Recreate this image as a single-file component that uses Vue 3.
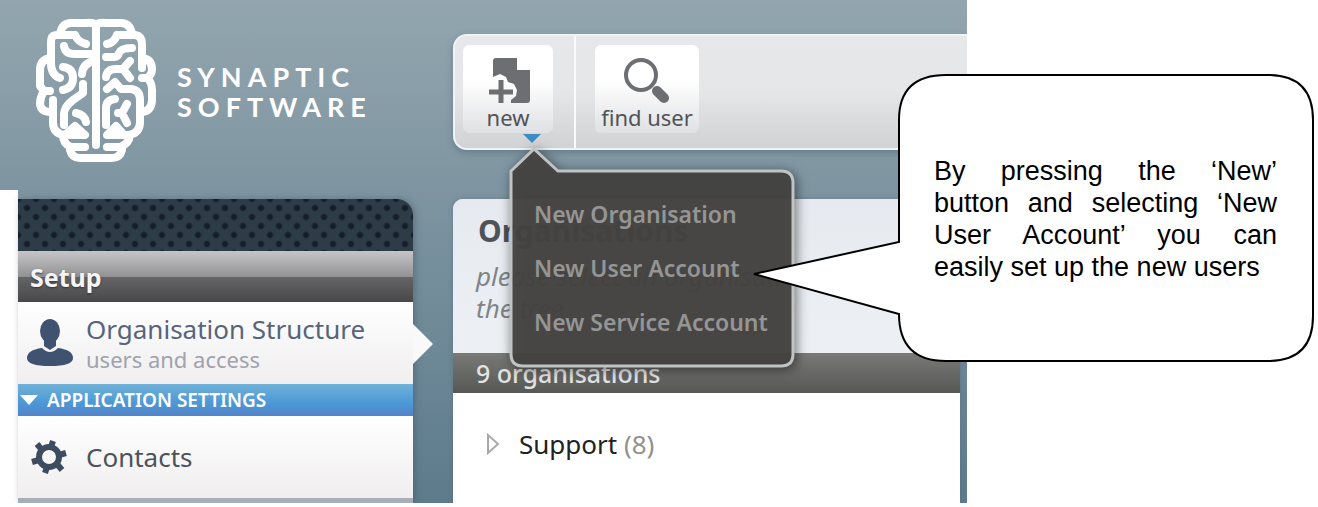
<script setup>
import { ref } from 'vue'

const menuOpen = ref(true)
const actions = ['New Organisation', 'New User Account', 'New Service Account']
</script>

<template>
    <div class="page">
        <div class="app">
            <aside class="sidebar">
                <header class="brand">
                    <svg class="brand-logo" viewBox="0 0 140 160" aria-hidden="true">
                        <path class="fold" d="M71 14V135M71 15C69 12 63 13 58 13H46Q37 13 35 24M71 15C73 12 79 13 84 13H96Q105 13 107 24M50 25H32Q26 25 26 32V53Q26 65 35 68M50 25Q53 32 61 34M25 48Q15 50 15 60V76L19 81Q15 87 15 94Q16 102 26 102M18 81H25M92 25H110Q117 26 117 34V58M92 25Q89 33 82 34M118 48Q127 50 127 59Q127 65 122 68Q127 72 127 80V91Q126 101 117 102M123 68H117" />
                        <path class="fold" d="M28 90V112Q28 124 40 125L50 116L60 125H38Q38 134 46 137H60M45 140Q47 148 55 148H87Q95 148 97 140M82 137H95Q104 134 105 125H82L91 116L99 125H104Q115 123 115 112V90Q115 80 106 79H96L90 72L82 79" />
                        <path class="fold" d="M39 36Q40 44 50 44H71M71 51Q58 52 57 64M38 57Q48 58 48 68Q48 78 38 80M58 74V83L48 90Q39 97 39 104V115M51 103Q60 105 61 112M81 47H89Q93 47 94 43Q96 38 107 38M81 67Q82 59 91 59H98L105 51M98 59L105 68M90 89Q81 90 81 98V115M102 94L97 103L102 113M97 103H93" />
                    </svg>
                    <p class="brand-name">SYNAPTIC<br />SOFTWARE</p>
                </header>
                <div class="side-body">
                    <nav class="side-panel">
                        <div class="grille"></div>
                        <h2 class="side-title">Setup</h2>
                        <a class="side-item active" href="#">
                            <svg class="side-icon" viewBox="0 0 48 48" aria-hidden="true">
                                <ellipse cx="24" cy="12" rx="10" ry="12" />
                                <path d="M18 18h12v9l-6 4-6-4zM16 29q8 8 16 0 15 2 15 10 0 8-23 8T1 39q0-8 15-10z" />
                            </svg>
                            <span class="side-text">
                                <span class="side-label">Organisation Structure</span>
                                <span class="side-note">users and access</span>
                            </span>
                        </a>
                        <h3 class="side-section">
                            <svg class="section-arrow" viewBox="0 0 18 10" aria-hidden="true"><path d="M0 0h18l-9 10z" /></svg>
                            APPLICATION SETTINGS
                        </h3>
                        <a class="side-item" href="#">
                            <svg class="side-icon" viewBox="0 0 48 48" aria-hidden="true">
                                <circle class="gear" cx="23" cy="24" r="10" />
                                <path class="teeth" d="M25 14l2-6M33 22l7-2M31 31l5 6M21 34l-2 6M13 27l-7 2M16 17l-5-6" />
                            </svg>
                            <span class="side-label">Contacts</span>
                        </a>
                        <div class="side-end"></div>
                    </nav>
                </div>
            </aside>

            <main class="content">
                <div class="toolbar">
                    <div class="tool-group">
                        <button class="tool tool-new" type="button" @click="menuOpen = !menuOpen">
                            <svg class="tool-icon" viewBox="0 0 48 48" aria-hidden="true">
                                <path class="solid" d="M9 4q0-3 3-3h21v12h13v30q0 3-3 3H27v-3l5-4 1-6-3-6-6-2-2-5-6-3-7 3z" />
                                <path class="plus" d="M17 23v23M5 35h24" />
                            </svg>
                            new
                        </button>
                        <svg class="drop-arrow" viewBox="0 0 18 9" aria-hidden="true"><path d="M0 0h18L9 9z" /></svg>
                        <div v-if="menuOpen" class="menu">
                            <svg class="menu-shape" viewBox="0 0 286 222" aria-hidden="true">
                                <path d="M2 24L25 2L49 24H272Q284 24 284 36V207Q284 219 272 219H14Q2 219 2 207Z" />
                            </svg>
                            <button v-for="action in actions" :key="action" class="menu-item" type="button">{{ action }}</button>
                        </div>
                    </div>
                    <button class="tool tool-find" type="button">
                        <svg class="tool-icon" viewBox="0 0 48 48" aria-hidden="true">
                            <circle class="lens" cx="18" cy="18" r="15" />
                            <path class="handle" d="M34 34l7 7" />
                        </svg>
                        find user
                    </button>
                </div>

                <section class="panel">
                    <header class="panel-head">
                        <h1>Organisations</h1>
                        <p>please select an organisation from<br />the tree</p>
                    </header>
                    <h2 class="panel-bar">9 organisations</h2>
                    <div class="tree-row">
                        <svg class="tree-arrow" viewBox="0 0 14 22" aria-hidden="true"><path d="M2 2v18l10-9z" /></svg>
                        <a href="#">Support <span>(8)</span></a>
                    </div>
                </section>
            </main>
        </div>

        <div class="callout">
            <svg class="callout-shape" viewBox="0 0 564 291" aria-hidden="true">
                <path d="M147 169V47Q147 2 194 2H516Q561 2 561 47V243Q561 288 516 288H194Q147 288 147 241L2 201Z" />
            </svg>
            <p>
                By pressing the ‘New’<br />
                button and selecting ‘New<br />
                User Account’ you can
                <span class="last-line">easily set up the new users</span>
            </p>
        </div>
    </div>
</template>

<style>
body {
    background: #fff;
}
</style>

<style scoped>
* {
    box-sizing: border-box;
}
.page {
    position: relative;
    padding: 0 351px 4px 0;
    font-family: "Noto Sans", "Open Sans", sans-serif;
}
h1,
h2,
h3,
p {
    margin: 0;
}
button {
    border: 0;
    font-family: inherit;
    cursor: pointer;
}
a {
    text-decoration: none;
}
.app {
    display: grid;
    grid-template-columns: 413px minmax(0, 1fr);
    overflow: hidden;
    background: linear-gradient(#93a6af, #7e95a1 38%, #5d7b8c);
}
.sidebar {
    display: flex;
    flex-direction: column;
}
.brand {
    display: flex;
    align-items: flex-start;
    gap: 12px;
    height: 190px;
    padding: 10px 0 0 25px;
}
.brand-logo {
    width: 140px;
    height: 160px;
}
.fold {
    fill: none;
    stroke: #fff;
    stroke-width: 8;
    stroke-linecap: round;
    stroke-linejoin: round;
}
.brand-name {
    padding-top: 52px;
    color: #fff;
    font-family: Lato, sans-serif;
    font-size: 27px;
    font-weight: 700;
    line-height: 30px;
    letter-spacing: 6px;
}
.side-body {
    padding-top: 9px;
    border-left: 18px solid #fff;
}
.side-panel {
    border-radius: 0 16px 0 0;
    box-shadow: 2px 0 6px #40566480;
}
.grille {
    height: 52px;
    border-radius: 0 16px 0 0;
    background:
        radial-gradient(circle, #141d29 2px, transparent 4px) 0 0 / 18px 18px,
        radial-gradient(circle, #141d29 2px, transparent 4px) 9px 9px / 18px 18px,
        #2e3c48;
}
.side-title {
    height: 51px;
    padding-left: 12px;
    background: linear-gradient(#c6c6c9, #929295 50%, #656567 51%, #48484a);
    color: #f4f4f4;
    font-size: 25px;
    line-height: 52px;
    text-shadow: 0 1px 2px #333;
}
.side-item {
    position: relative;
    display: flex;
    align-items: center;
    gap: 12px;
    height: 82px;
    padding-left: 8px;
    background: linear-gradient(#fff, #f0eeef);
    color: #4d5258;
}
.side-item.active {
    color: #56647c;
}
.side-item.active::after {
    content: "";
    position: absolute;
    left: 100%;
    top: 22px;
    border: 20px solid transparent;
    border-left-color: #f9f9fa;
    border-right-width: 0;
}
.side-icon {
    width: 48px;
    height: 48px;
    flex: none;
    fill: #3f5370;
}
.gear {
    fill: none;
    stroke: #3e4c60;
    stroke-width: 6;
}
.teeth {
    stroke: #3e4c60;
    stroke-width: 6;
}
.side-text {
    display: flex;
    flex-direction: column;
}
.side-label {
    font-size: 26px;
    line-height: 32px;
}
.side-note {
    color: #a0a2ad;
    font-size: 22px;
    line-height: 28px;
}
.side-section {
    display: flex;
    align-items: center;
    gap: 9px;
    height: 32px;
    padding-left: 2px;
    background: linear-gradient(#70b1d8, #4c98d6 60%, #5383c8);
    color: #fff;
    font-size: 19px;
    font-weight: 600;
}
.section-arrow {
    width: 18px;
    fill: #fff;
}
.side-end {
    height: 5px;
    background: #a8aeb9;
}
.content {
    padding: 34px 0 0 40px;
}
.toolbar {
    display: flex;
    height: 116px;
    border: 2px solid #edf3f6;
    border-right: 0;
    border-radius: 14px 0 0 14px;
    background: linear-gradient(#e6e8ea, #e4e6e8 50%, #d0d2d4);
    box-shadow: 0 3px 6px #50657380;
}
.tool-group {
    position: relative;
    width: 121px;
    padding: 9px 0 0 8px;
    border-right: 2px solid #fafbfc;
}
.tool {
    display: flex;
    flex-direction: column;
    align-items: center;
    height: 88px;
    padding: 12px 0 0;
    border-radius: 6px;
    background: linear-gradient(#fff 40%, #e0e1e3);
    color: #505358;
    font-size: 22px;
    line-height: 24px;
}
.tool-new {
    width: 90px;
}
.tool-find {
    width: 104px;
    margin: 9px 0 0 19px;
}
.tool-icon {
    width: 48px;
    height: 48px;
    flex: none;
}
.solid {
    fill: #6d6e71;
}
.plus {
    stroke: #6d6e71;
    stroke-width: 5;
}
.lens {
    fill: #fff;
    stroke: #6d6e71;
    stroke-width: 4;
}
.handle {
    stroke: #6d6e71;
    stroke-width: 10;
    stroke-linecap: round;
}
.drop-arrow {
    position: absolute;
    top: 98px;
    left: 68px;
    width: 18px;
    fill: #3f8cc4;
}
.menu {
    position: absolute;
    z-index: 2;
    top: 111px;
    left: 54px;
    display: flex;
    flex-direction: column;
    width: 286px;
    height: 222px;
    padding: 40px 0 0 25px;
}
.menu-shape {
    position: absolute;
    top: 0;
    left: 0;
    width: 286px;
    height: 222px;
    overflow: visible;
    fill: #444341;
    fill-opacity: 0.95;
    stroke: #c0c3c4;
    stroke-width: 3;
    filter: drop-shadow(2px 2px 6px #0008);
}
.menu-item {
    position: relative;
    height: 54px;
    padding: 0;
    background: none;
    color: #949594;
    font-size: 23px;
    font-weight: 600;
    text-align: left;
    white-space: nowrap;
}
.panel {
    margin: 49px 7px 0 0;
    height: 304px;
    border-radius: 10px 10px 0 0;
    background: #fff;
    box-shadow: 0 0 4px #50657380;
}
.panel-head {
    height: 154px;
    padding: 12px 0 0 23px;
    border-radius: 10px 10px 0 0;
    background: linear-gradient(#e6eaf0, #edf0f3);
}
.panel-head h1 {
    padding-left: 2px;
    color: #4f5358;
    font-size: 30px;
    line-height: 40px;
}
.panel-head p {
    margin-top: 9px;
    color: #808489;
    font-size: 26px;
    font-style: italic;
    line-height: 32px;
}
.panel-bar {
    height: 40px;
    padding-left: 23px;
    background: linear-gradient(#797978, #575756);
    color: #e2e3e3;
    font-size: 25px;
    font-weight: 500;
    line-height: 40px;
}
.tree-row {
    display: flex;
    align-items: center;
    gap: 19px;
    padding: 34px 0 0 33px;
    font-size: 26px;
    line-height: 34px;
}
.tree-row a {
    color: #222;
}
.tree-row span {
    color: #909090;
}
.tree-arrow {
    width: 14px;
    height: 22px;
    fill: none;
    stroke: #aaa;
    stroke-width: 2;
}
.callout {
    position: absolute;
    z-index: 3;
    top: 73px;
    right: 2px;
    width: 416px;
    height: 289px;
    padding: 82px 39px 0 34px;
}
.callout-shape {
    position: absolute;
    top: 0;
    right: 0;
    width: 564px;
    height: 291px;
    fill: #fff;
    stroke: #000;
    stroke-width: 2;
}
.callout p {
    position: relative;
    font-family: "Liberation Sans", Arial, sans-serif;
    font-size: 27px;
    line-height: 32px;
    text-align: justify;
    text-align-last: justify;
}
.last-line {
    display: block;
    text-align-last: left;
}
</style>
